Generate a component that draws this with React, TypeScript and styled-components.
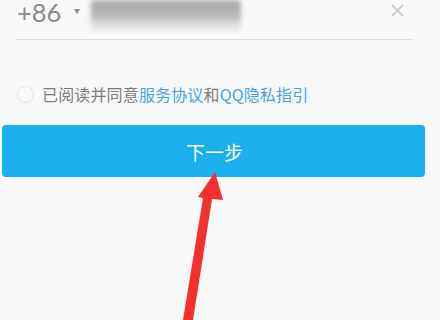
import styled, { createGlobalStyle } from 'styled-components';

const GlobalStyle = createGlobalStyle`
  html, body {
    margin: 0;
    padding: 0;
    background: #f8f8f8;
    font-family: "Noto Sans CJK SC", "Noto Sans", sans-serif;
  }
`;

export default function App() {
  return (
    <Page>
      <GlobalStyle />
      <PhoneRow>
        <Code>+86</Code>
        <Caret />
        <Masked />
        <Spacer />
        <ClearIcon viewBox="0 0 16 16">
          <path d="M2 2 L14 14 M14 2 L2 14" />
        </ClearIcon>
      </PhoneRow>
      <AgreeRow>
        <Radio />
        <AgreeText>
          已阅读并同意<Link>服务协议</Link>和<Link>QQ隐私指引</Link>
        </AgreeText>
      </AgreeRow>
      <NextButton>下一步</NextButton>
      <Arrow viewBox="0 0 440 320">
        <polygon points="183,320 203,198 198,197 215,172 223,200 212,199 193,320" />
      </Arrow>
    </Page>
  );
}

const Page = styled.div`
  position: relative;
  width: 440px;
  height: 320px;
  overflow: hidden;
  display: flex;
  flex-direction: column;
`;

const PhoneRow = styled.div`
  display: flex;
  align-items: flex-start;
  height: 39px;
  margin: 0 27px 0 16px;
  border-bottom: 1px solid #dcdcdc;
`;

const Code = styled.span`
  font-family: Lato, "Noto Sans", sans-serif;
  font-size: 25.5px;
  line-height: 25px;
  color: #8a8a8a;
  margin-left: 1px;
`;

const Caret = styled.span`
  width: 0;
  height: 0;
  margin: 9px 0 0 13px;
  border-left: 3.5px solid transparent;
  border-right: 3.5px solid transparent;
  border-top: 5px solid #888;
`;

const Masked = styled.div`
  width: 150px;
  height: 32px;
  margin-left: 11px;
  border-radius: 4px;
  background: linear-gradient(180deg, #a9a9a9 0%, #b3b3b3 45%, #dadada 72%, #f0f0f0 100%);
  filter: blur(2.5px);
`;

const Spacer = styled.div`
  flex: 1;
`;

const ClearIcon = styled.svg`
  width: 15px;
  height: 15px;
  margin: 3px 8px 0 0;
  fill: none;
  stroke: #c8c8c8;
  stroke-width: 1.6;
`;

const AgreeRow = styled.div`
  display: flex;
  align-items: center;
  gap: 8px;
  margin: 45px 0 0 17px;
  height: 18px;
`;

const Radio = styled.span`
  width: 15px;
  height: 15px;
  border-radius: 50%;
  border: 1px solid #e0e0e0;
  background: #fafafa;
`;

const AgreeText = styled.span`
  font-size: 16px;
  color: #7c7c7c;
  letter-spacing: 0.15px;
`;

const Link = styled.span`
  color: #4ba2e2;
`;

const NextButton = styled.div`
  margin: 22px 0 0 2px;
  width: 423px;
  height: 52px;
  border-radius: 4px;
  background: #1bafed;
  color: #fff;
  font-size: 19px;
  display: flex;
  align-items: center;
  justify-content: center;
  padding-left: 2px;
  box-sizing: border-box;
`;

const Arrow = styled.svg`
  position: absolute;
  left: 0;
  top: 0;
  width: 440px;
  height: 320px;
  fill: #f2302c;
  pointer-events: none;
`;
